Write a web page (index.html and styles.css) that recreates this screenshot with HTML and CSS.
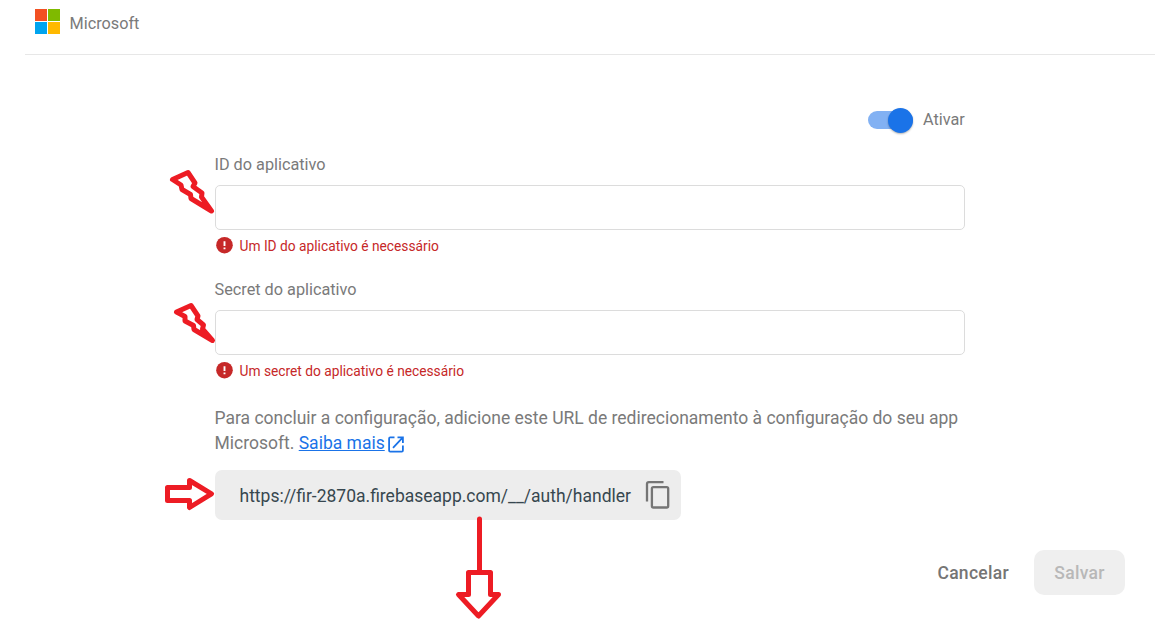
FILE: index.html
```
<!DOCTYPE html>
<html lang="pt-BR">
<head>
<meta charset="utf-8">
<title>Microsoft</title>
<link rel="stylesheet" href="styles.css">
</head>
<body>
<div class="page">
  <header class="header">
    <svg class="logo" width="26" height="26" viewBox="0 0 26 26">
      <path fill="#f25022" d="M0 0h12v12H0z"/>
      <path fill="#7fba00" d="M13 0h12v12H13z"/>
      <path fill="#00a4ef" d="M0 13h12v12H0z"/>
      <path fill="#ffb900" d="M13 13h12v12H13z"/>
    </svg>
    <span class="provider">Microsoft</span>
  </header>
  <main class="form">
    <div class="enable">
      <span class="switch"><span class="thumb"></span></span>
      <span class="enable-label">Ativar</span>
    </div>
    <section class="field">
      <label class="label" for="app-id">ID do aplicativo</label>
      <input class="input" id="app-id" type="text">
      <p class="error">
        <svg width="17" height="17" viewBox="0 0 17 17"><circle cx="8.5" cy="8.2" r="8.3" fill="#c62828"/><path d="M8.5 4.2v4.8M8.5 10.4v1.8" stroke="#fff" stroke-width="1.9"/></svg>
        <span class="error-text">Um ID do aplicativo é necessário</span>
      </p>
    </section>
    <section class="field">
      <label class="label" for="app-secret">Secret do aplicativo</label>
      <input class="input" id="app-secret" type="text">
      <p class="error">
        <svg width="17" height="17" viewBox="0 0 17 17"><circle cx="8.5" cy="8.2" r="8.3" fill="#c62828"/><path d="M8.5 4.2v4.8M8.5 10.4v1.8" stroke="#fff" stroke-width="1.9"/></svg>
        <span class="error-text">Um secret do aplicativo é necessário</span>
      </p>
    </section>
    <p class="help">Para concluir a configuração, adicione este URL de redirecionamento à configuração do seu app<br>Microsoft. <a class="link" href="#">Saiba mais</a><svg class="external" width="16" height="17" viewBox="0 0 16 17" fill="none" stroke="#1a73e8" stroke-width="1.8"><path d="M6.500 1.400H2.200Q1.100 1.400 1.100 2.600V14.400Q1.100 15.600 2.200 15.600H13.800Q14.900 15.600 14.900 14.400V9.500M9.500 1.400h5.400V7M14.600 1.700L5 11.800"/></svg></p>
    <div class="url-box">
      <span class="url">https://fir-2870a.firebaseapp.com/__/auth/handler</span>
      <svg class="copy" width="26" height="29" viewBox="0 0 26 29" fill="none" stroke="#757575" stroke-width="2.3"><path d="M2 20.500V3Q2 1.200 3.800 1.200H18.500"/><rect x="6.900" y="6.100" width="16.300" height="20.400" rx="1.500"/></svg>
    </div>
  </main>
  <footer class="actions">
    <button class="button cancel" type="button">Cancelar</button>
    <button class="button save" type="button" disabled>Salvar</button>
  </footer>
  <svg class="marks" width="1176" height="632" viewBox="0 0 1176 632">
    <path d="M172.500 179.500L188 172.500L195 183L193 186.500L202 193L201.500 197L211.500 211L191 198.500L190.500 194.500L182 189.500L181 185Z"/>
    <path d="M176.500 312L191 305.500L198 316L197 319.500L203.500 325L202.500 329L212.500 340.500L194 329.500L193.500 325.500L185 321L185 316.500Z"/>
    <path d="M167.500 487.500H189.500V480.500L211.500 493.800L189.500 507.500V500.500H167.500Z"/>
    <path d="M479.500 519V572M468.500 572.500H490.500V594.500H498.500L478.500 616L458.500 594.500H468.500Z"/>
  </svg>
</div>
</body>
</html>
```
FILE: styles.css
```
* { box-sizing: border-box; }
body {
  margin: 0;
  background: #fff;
  color: #7a7a7a;
  font-family: Roboto, "Liberation Sans", sans-serif;
}
.page { position: relative; height: 632px; overflow: hidden; }
.header {
  display: flex;
  height: 55px;
  margin: 0 21px 0 25px;
  padding: 9px 0 0 10px;
  border-bottom: 1px solid #e7e7e7;
}
.provider { margin-left: 8.5px; font-size: 16.25px; line-height: 29px; }
.form { width: 750px; margin-left: 215px; padding-top: 50px; }
.enable { display: flex; justify-content: flex-end; align-items: center; height: 30px; }
.switch {
  display: flex;
  justify-content: flex-end;
  align-items: center;
  width: 45px;
  height: 18px;
  margin-right: 10px;
  border-radius: 9px;
  background: #82b1f3;
}
.thumb {
  flex: none;
  width: 25px;
  height: 25px;
  border-radius: 50%;
  background: #1a73e8;
  box-shadow: 0 1px 2px rgba(0, 0, 0, .3);
}
.enable-label { width: 42px; font-size: 16.25px; line-height: 28px; }
.field { height: 125px; padding-top: 15px; }
.label { display: block; height: 35px; margin-left: -.5px; font-size: 16.25px; line-height: 29px; }
.input {
  display: block;
  width: 750px;
  height: 45px;
  padding: 0 12px;
  border: 1px solid #dcdcdc;
  border-radius: 5px;
  background: #fff;
  font: inherit;
}
.error {
  display: flex;
  align-items: center;
  gap: 6.5px;
  height: 30px;
  margin: 0;
  padding-left: 1px;
  color: #c62828;
  font-size: 13.75px;
}
.error svg { overflow: visible; }
.error-text { padding-top: 2px; line-height: 30px; }
.help { margin: 21px 0 0 -.5px; font-size: 17.5px; line-height: 25px; white-space: nowrap; }
.link { color: #1a73e8; text-decoration: underline; }
.external { margin-left: 3px; vertical-align: -4px; }
.url-box {
  display: flex;
  align-items: center;
  width: 466px;
  height: 50px;
  margin-top: 14px;
  padding: 0 10px 0 24.5px;
  border-radius: 7px;
  background: #ededed;
}
.url { padding-top: 2px; color: #37474f; font-size: 17.5px; white-space: nowrap; }
.copy { margin-left: auto; }
.actions { display: flex; justify-content: flex-end; margin-top: 30px; padding-right: 51px; }
.button {
  height: 45px;
  padding: 2px 0 0;
  border: 0;
  border-radius: 10px;
  background: transparent;
  color: #757575;
  font: 500 17.5px/43px Roboto, "Liberation Sans", sans-serif;
  letter-spacing: .3px;
}
.cancel { margin-right: 25px; }
.save { width: 91px; background: #efefef; color: #b8b8b8; }
.marks {
  position: absolute;
  inset: 0;
  pointer-events: none;
  fill: none;
  stroke: #ed1c24;
  stroke-width: 5;
  stroke-linejoin: round;
  stroke-linecap: round;
}
```
